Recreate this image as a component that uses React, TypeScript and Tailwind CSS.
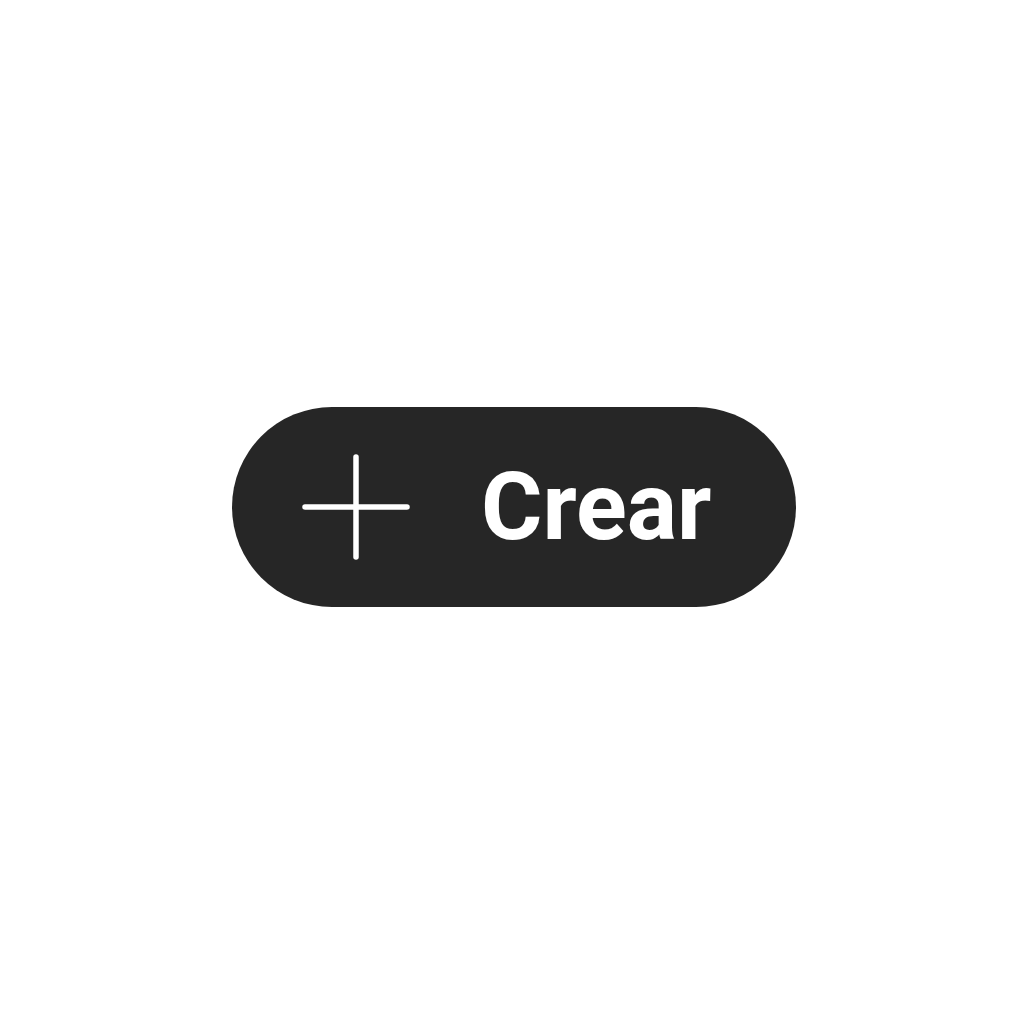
export default function App() {
  return (
    <div className="flex h-screen w-full items-center justify-center bg-white pb-[10px] pl-[4px]">
      <button
        type="button"
        className="flex h-[200px] w-[564px] items-center rounded-full bg-[#262626] pl-[70px] text-white"
      >
        <svg
          width="108"
          height="106"
          viewBox="0 0 108 106"
          fill="none"
          stroke="white"
          strokeWidth="5.5"
          strokeLinecap="round"
        >
          <path d="M3 53 H105" />
          <path d="M54 3 V103" />
        </svg>
        <span
          className="ml-[71px] text-[94px] font-bold leading-none"
          style={{ fontFamily: "Roboto, 'Liberation Sans', sans-serif" }}
        >
          Crear
        </span>
      </button>
    </div>
  );
}
